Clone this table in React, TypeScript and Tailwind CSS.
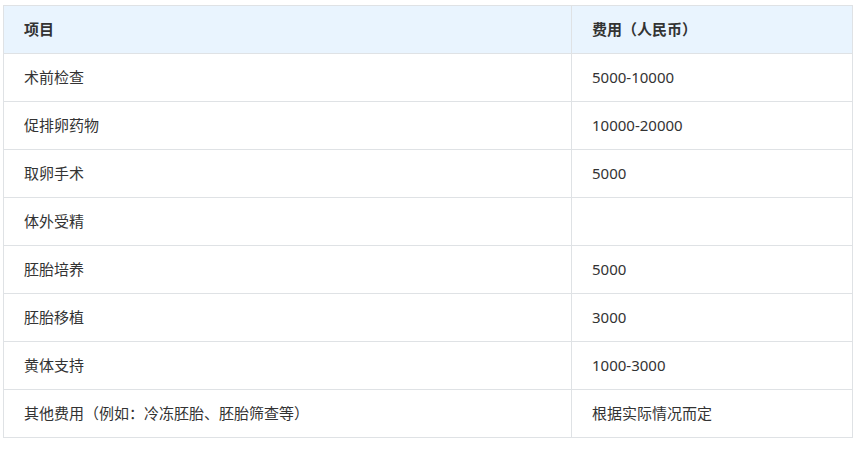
import React from "react";

const rows: [string, string][] = [
  ["术前检查", "5000-10000"],
  ["促排卵药物", "10000-20000"],
  ["取卵手术", "5000"],
  ["体外受精", ""],
  ["胚胎培养", "5000"],
  ["胚胎移植", "3000"],
  ["黄体支持", "1000-3000"],
  ["其他费用（例如：冷冻胚胎、胚胎筛查等）", "根据实际情况而定"],
];

export default function App() {
  return (
    <div
      className="w-[863px] h-[449px] bg-white pt-[5px] pl-[3px]"
      style={{ fontFamily: '"Noto Sans", "Noto Sans CJK SC", sans-serif' }}
    >
      <table className="w-[850px] border-collapse text-[15px] text-[#333333] table-fixed">
        <colgroup>
          <col className="w-[568px]" />
          <col />
        </colgroup>
        <thead>
          <tr className="bg-[#e9f4fe] h-[48px]">
            <th className="border border-[#dfe2e5] px-[20px] text-left font-bold">项目</th>
            <th className="border border-[#dfe2e5] px-[20px] text-left font-bold">费用（人民币）</th>
          </tr>
        </thead>
        <tbody>
          {rows.map(([a, b]) => (
            <tr key={a} className="h-[48px]">
              <td className="border border-[#dfe2e5] px-[20px]">{a}</td>
              <td className="border border-[#dfe2e5] px-[20px]">{b}</td>
            </tr>
          ))}
        </tbody>
      </table>
    </div>
  );
}
